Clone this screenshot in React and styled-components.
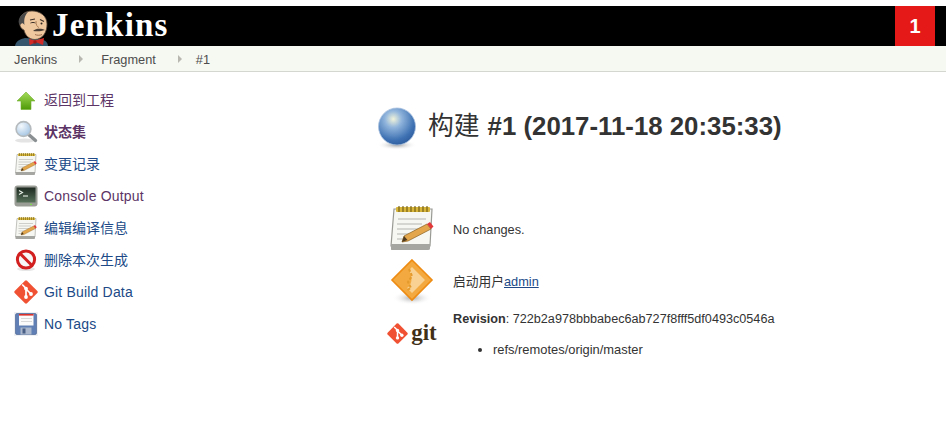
import React from 'react';
import styled, { createGlobalStyle } from 'styled-components';

const GlobalStyle = createGlobalStyle`
  html, body {
    margin: 0;
    padding: 0;
    background: #fff;
    overflow: hidden;
  }
  body {
    font-family: "Liberation Sans", "Noto Sans CJK SC", Arial, sans-serif;
    font-size: 12.75px;
    color: #333;
  }
`;

const Page = styled.div`
  width: 946px;
  height: 441px;
  padding-top: 6px;
  box-sizing: border-box;
`;

const Header = styled.header`
  height: 40px;
  background: #000;
  display: flex;
  align-items: stretch;
  justify-content: space-between;
  padding: 0 11px 0 15px;
`;

const Brand = styled.div`
  display: flex;
  align-items: flex-start;
  gap: 1px;
  overflow: hidden;
`;

const Wordmark = styled.span`
  font-family: "Liberation Serif", "DejaVu Serif", serif;
  font-weight: bold;
  font-size: 33px;
  line-height: 38px;
  color: #fff;
  letter-spacing: 1.2px;
`;

const Badge = styled.div`
  width: 40px;
  background: #e61919;
  color: #fff;
  font-weight: bold;
  font-size: 20px;
  display: flex;
  align-items: center;
  justify-content: center;
`;

const Breadcrumbs = styled.nav`
  height: 25px;
  box-sizing: content-box;
  background: #f6f8f2;
  border-bottom: 1px solid #d3d7cf;
  display: flex;
  align-items: center;
  padding-left: 14px;
  font-size: 12.75px;
`;

const Crumb = styled.span`
  color: #4d4d4d;
  padding-top: 2px;
`;

const CrumbArrow = styled.span`
  width: 0;
  height: 0;
  margin: 0 ${(p) => p.$right}px 0 ${(p) => p.$left}px;
  border-left: 4px solid #b8b8b0;
  border-top: 4px solid transparent;
  border-bottom: 4px solid transparent;
`;

const Body = styled.div`
  display: flex;
  align-items: flex-start;
`;

const Sidebar = styled.ul`
  list-style: none;
  margin: 0;
  padding: 12px 0 0 14px;
  width: 377px;
  box-sizing: border-box;
  flex: none;
`;

const SideItem = styled.li`
  height: 32px;
  display: flex;
  align-items: center;
  gap: 6px;
  font-size: 14px;
`;

const IconSlot = styled.span`
  width: 24px;
  height: 24px;
  flex: none;
  display: flex;
  svg { display: block; }
`;

const SideLink = styled.a`
  color: ${(p) => (p.$visited ? '#5c3566' : '#204a87')};
  font-weight: ${(p) => (p.$bold ? 'bold' : 'normal')};
  letter-spacing: ${(p) => (p.$latin ? '0.18px' : '0')};
  margin-top: ${(p) => (p.$latin ? '0' : '-2px')};
  text-decoration: none;
`;

const Main = styled.main`
  flex: 1;
  padding-top: 30px;
`;

const Title = styled.h1`
  margin: 0 0 54px;
  display: flex;
  align-items: center;
  gap: 3px;
  height: 48px;
  font-size: 25.8px;
  font-weight: bold;
  color: #333;
`;

const TitleText = styled.span`
  padding-bottom: 6px;
`;

const TitleWord = styled.span`
  font-weight: normal;
  margin-right: 8px;
`;

const Rows = styled.div`
  display: grid;
  grid-template-columns: 48px 1fr;
  column-gap: 17px;
  padding-left: 11px;
  row-gap: 6px;
`;

const RowIcon = styled.div`
  display: flex;
  align-items: ${(p) => (p.$top ? 'flex-start' : 'center')};
  justify-content: center;
`;

const RowText = styled.div`
  align-self: ${(p) => (p.$top ? 'start' : 'center')};
  margin-top: ${(p) => (p.$top ? '-1px' : '0')};
  padding-top: ${(p) => (p.$nudge ? '4px' : '0')};
  line-height: 16px;
  font-size: ${(p) => (p.$top ? '12.65px' : 'inherit')};
`;

const UserLink = styled.a`
  color: #204a87;
  text-decoration: underline;
`;

const Refs = styled.ul`
  margin: 15px 0 0;
  padding-left: 40px;
  line-height: 16px;
  font-size: 12.9px;
`;

const GitLogo = styled.div`
  display: flex;
  align-items: center;
  gap: 3px;
  height: 30px;
  margin-top: 6px;
`;

const GitWord = styled.span`
  font-family: "Liberation Serif", serif;
  font-weight: bold;
  font-size: 23px;
  line-height: 24px;
  color: #413018;
`;

const Diamond = ({ size }) => (
  <svg width={size} height={size} viewBox="0 0 24 24">
    <path d="M.7 11 11 .7a1.5 1.5 0 0 1 2 0L23.3 11a1.5 1.5 0 0 1 0 2L13 23.3a1.5 1.5 0 0 1-2 0L.7 13a1.5 1.5 0 0 1 0-2z" fill="#f05133" />
    <path d="M8.2 4.5 12 8.3v8M12 9l5 5" fill="none" stroke="#fff" strokeWidth="1.7" />
    <circle cx="12" cy="8.6" r="1.9" fill="#fff" />
    <circle cx="12" cy="17" r="1.9" fill="#fff" />
    <circle cx="17" cy="14" r="1.9" fill="#fff" />
  </svg>
);

const Arrow = () => (
  <svg width="24" height="24" viewBox="0 0 24 24">
    <defs>
      <linearGradient id="arr" x1="0" y1="0" x2="0" y2="1">
        <stop offset="0" stopColor="#a5dc5a" />
        <stop offset="1" stopColor="#4e9a06" />
      </linearGradient>
    </defs>
    <path d="M12 4 21 13H17V21.5H7V13H3z" fill="url(#arr)" stroke="#6fae2c" strokeWidth=".6" />
  </svg>
);

const Magnifier = () => (
  <svg width="24" height="24" viewBox="0 0 24 24">
    <defs>
      <radialGradient id="lens" cx=".35" cy=".3" r=".8">
        <stop offset="0" stopColor="#f4f9fd" />
        <stop offset="1" stopColor="#9dc0e0" />
      </radialGradient>
    </defs>
    <ellipse cx="11" cy="20.5" rx="10" ry="2" fill="#e4e4e4" />
    <path d="M14 14 21.5 20.5" stroke="#8a8f92" strokeWidth="3.4" strokeLinecap="round" />
    <circle cx="9.5" cy="9" r="7.4" fill="url(#lens)" stroke="#b5babd" strokeWidth="1.6" />
  </svg>
);

const Notepad = ({ size = 24 }) => (
  <svg width={size} height={size} viewBox="0 0 48 48">
    <path d="M6 5H44L42 42H3z" fill="#f6f6f2" stroke="#9a9a95" strokeWidth="1.2" />
    <path d="M3 40H42V44.5Q42 46 40 46H4Q2.5 46 3 44.5z" fill="#a5a5a2" />
    <rect x="8" y="3" width="34" height="5" rx="1" fill="#d7b63a" />
    <path d="M11 2V8M15 2V8M19 2V8M23 2V8M27 2V8M31 2V8M35 2V8M39 2V8" stroke="#6d5a12" strokeWidth="1.1" />
    <path d="M10 15H38M9 20H34M9 25H30M9 30H22M9 35H17" stroke="#b4b4b0" strokeWidth="1.2" />
    <path d="M14 38 16 32 39 20 43 25 20 37z" fill="#e3a64b" stroke="#8a6020" strokeWidth=".7" />
    <path d="M14 38 16 32 19.5 36z" fill="#4f3a1f" />
    <path d="M39 20 42 18 45.5 22.5 43 25z" fill="#e2383a" />
  </svg>
);

const Terminal = () => (
  <svg width="24" height="24" viewBox="0 0 24 24">
    <defs>
      <linearGradient id="screen" x1="0" y1="0" x2="0" y2="1">
        <stop offset="0" stopColor="#1d2a20" />
        <stop offset="1" stopColor="#56705a" />
      </linearGradient>
    </defs>
    <rect x=".5" y="1.5" width="23" height="21" rx="3" fill="#9a9d96" />
    <rect x="2.5" y="3.5" width="19" height="15" fill="url(#screen)" />
    <path d="M5 6.5 8.5 8.5 5 10.5" fill="none" stroke="#e8f0e8" strokeWidth="1.1" />
    <path d="M9 12H14" stroke="#e8f0e8" strokeWidth="1.1" />
    <rect x="16" y="19.8" width="2" height="1.2" fill="#7ddc48" />
  </svg>
);

const NoSign = () => (
  <svg width="24" height="24" viewBox="0 0 24 24">
    <ellipse cx="12" cy="21" rx="9" ry="2" fill="#e6e6e6" />
    <circle cx="12" cy="11.5" r="8.6" fill="#f7f7f7" stroke="#d21f1f" strokeWidth="3" />
    <path d="M6 5.5 18 17.5" stroke="#d21f1f" strokeWidth="3" />
  </svg>
);

const Floppy = () => (
  <svg width="24" height="24" viewBox="0 0 24 24">
    <rect x="0" y="0" width="24" height="24" fill="#eef0f4" />
    <rect x="1.5" y="1.5" width="21" height="21" rx="1.5" fill="#5f7fb5" stroke="#3f5a8a" strokeWidth=".6" />
    <rect x="5" y="2" width="14.5" height="11.5" fill="#fbfbfb" />
    <rect x="5" y="2" width="14.5" height="1.6" fill="#d9322c" />
    <path d="M7 6.5H18M7 9.5H18" stroke="#d0d0d0" strokeWidth=".8" />
    <rect x="6.5" y="15.5" width="11" height="7" fill="#aab7cc" />
    <rect x="8.5" y="16.5" width="3" height="5" fill="#4a5f85" />
  </svg>
);

const Ball = () => (
  <svg width="48" height="48" viewBox="0 0 48 48">
    <defs>
      <radialGradient id="ball" cx=".4" cy=".3" r=".75">
        <stop offset="0" stopColor="#f1f3da" />
        <stop offset=".3" stopColor="#91b5dc" />
        <stop offset=".75" stopColor="#3f72b3" />
        <stop offset="1" stopColor="#2c5a9a" />
      </radialGradient>
      <radialGradient id="ballShadow">
        <stop offset="0" stopColor="#9a9a9a" />
        <stop offset="1" stopColor="#fff" stopOpacity="0" />
      </radialGradient>
    </defs>
    <ellipse cx="20" cy="43" rx="20" ry="5" fill="url(#ballShadow)" />
    <circle cx="20" cy="24.5" r="18.5" fill="url(#ball)" stroke="#a9c2e0" strokeWidth=".8" />
  </svg>
);

const UserBadge = () => (
  <svg width="48" height="48" viewBox="0 0 48 48">
    <defs>
      <radialGradient id="floor">
        <stop offset="0" stopColor="#a8a8a8" />
        <stop offset="1" stopColor="#fff" stopOpacity="0" />
      </radialGradient>
    </defs>
    <ellipse cx="24" cy="40" rx="20" ry="7" fill="url(#floor)" />
    <path d="M24 2 44 22 24 42 4 22z" fill="#f3a93f" stroke="#ee8b12" strokeWidth="1.6" />
    <path d="M24 9 37 22 24 35 19 30C24 27 25 20 21 12z" fill="#f8d193" />
    <path d="M21 11 24 18 20 24 23 30 19 32" fill="none" stroke="#e59a2c" strokeWidth="2" strokeDasharray="3 1.5" />
  </svg>
);

const Butler = () => (
  <svg width="36" height="40" viewBox="0 0 36 40">
    <path d="M0 40C1 35 5 33 10 32L24 33C29 33 33 36 33 40z" fill="#35566c" />
    <path d="M16 35 14 32.5 14.5 39.5zM18 35 29 32 28 39z" fill="#d22a26" />
    <path d="M15 33 22 35.5 15 39z" fill="#d22a26" />
    <circle cx="20" cy="36" r="1.7" fill="#a51714" />
    <path d="M5 16C4 9 10 5 17 5 25 5 32 10 32 18 32 26 28 33 20 33.5 14 33.5 10 29 9 24 6 23 4 19 5 16z" fill="#f0c8a0" stroke="#5c4a3c" strokeWidth=".8" />
    <path d="M4 18C2 11 9 6 13 6 9 10 9 15 9.5 19 8 17 7 17 6 18 6 19 5 19 4 18z" fill="#4a4a4a" />
    <path d="M15 14 20 13M25 13.5 29 15.5" stroke="#3d3028" strokeWidth="1.2" />
    <path d="M15.5 17C17 16.3 19 16.3 20.5 17" fill="none" stroke="#3d3028" strokeWidth="1" />
    <circle cx="26.5" cy="17.5" r="1" fill="#2e2620" />
    <path d="M21 15C21 19 22 21 24 21.5" fill="none" stroke="#a87850" strokeWidth=".9" />
    <path d="M18 25C21 22 27 22.5 30 24 26 25.5 22 25.5 18 25z" fill="#4a3e36" />
    <path d="M20 28.5C22 29.5 25 29.5 27 28.5" fill="none" stroke="#8c5a3c" strokeWidth=".8" />
  </svg>
);

const sideItems = [
  { icon: <Arrow />, label: '返回到工程', visited: true },
  { icon: <Magnifier />, label: '状态集', visited: true, bold: true },
  { icon: <Notepad />, label: '变更记录' },
  { icon: <Terminal />, label: 'Console Output', visited: true, latin: true },
  { icon: <Notepad />, label: '编辑编译信息' },
  { icon: <NoSign />, label: '删除本次生成' },
  { icon: <Diamond size={24} />, label: 'Git Build Data', latin: true },
  { icon: <Floppy />, label: 'No Tags', latin: true },
];

export default function App() {
  return (
    <Page>
      <GlobalStyle />
      <Header>
        <Brand>
          <Butler />
          <Wordmark>Jenkins</Wordmark>
        </Brand>
        <Badge>1</Badge>
      </Header>
      <Breadcrumbs>
        <Crumb>Jenkins</Crumb>
        <CrumbArrow $left={22} $right={18} />
        <Crumb>Fragment</Crumb>
        <CrumbArrow $left={22} $right={14} />
        <Crumb>#1</Crumb>
      </Breadcrumbs>
      <Body>
        <Sidebar>
          {sideItems.map((item) => (
            <SideItem key={item.label}>
              <IconSlot>{item.icon}</IconSlot>
              <SideLink $visited={item.visited} $bold={item.bold} $latin={item.latin}>{item.label}</SideLink>
            </SideItem>
          ))}
        </Sidebar>
        <Main>
          <Title>
            <Ball />
            <TitleText><TitleWord>构建</TitleWord>#1 (2017-11-18 20:35:33)</TitleText>
          </Title>
          <Rows>
            <RowIcon><Notepad size={48} /></RowIcon>
            <RowText $nudge>No changes.</RowText>
            <RowIcon><UserBadge /></RowIcon>
            <RowText>启动用户<UserLink>admin</UserLink></RowText>
            <RowIcon $top>
              <GitLogo>
                <Diamond size={21} />
                <GitWord>git</GitWord>
              </GitLogo>
            </RowIcon>
            <RowText $top>
              <b>Revision</b>: 722b2a978bbbabec6ab727f8fff5df0493c0546a
              <Refs><li>refs/remotes/origin/master</li></Refs>
            </RowText>
          </Rows>
        </Main>
      </Body>
    </Page>
  );
}
